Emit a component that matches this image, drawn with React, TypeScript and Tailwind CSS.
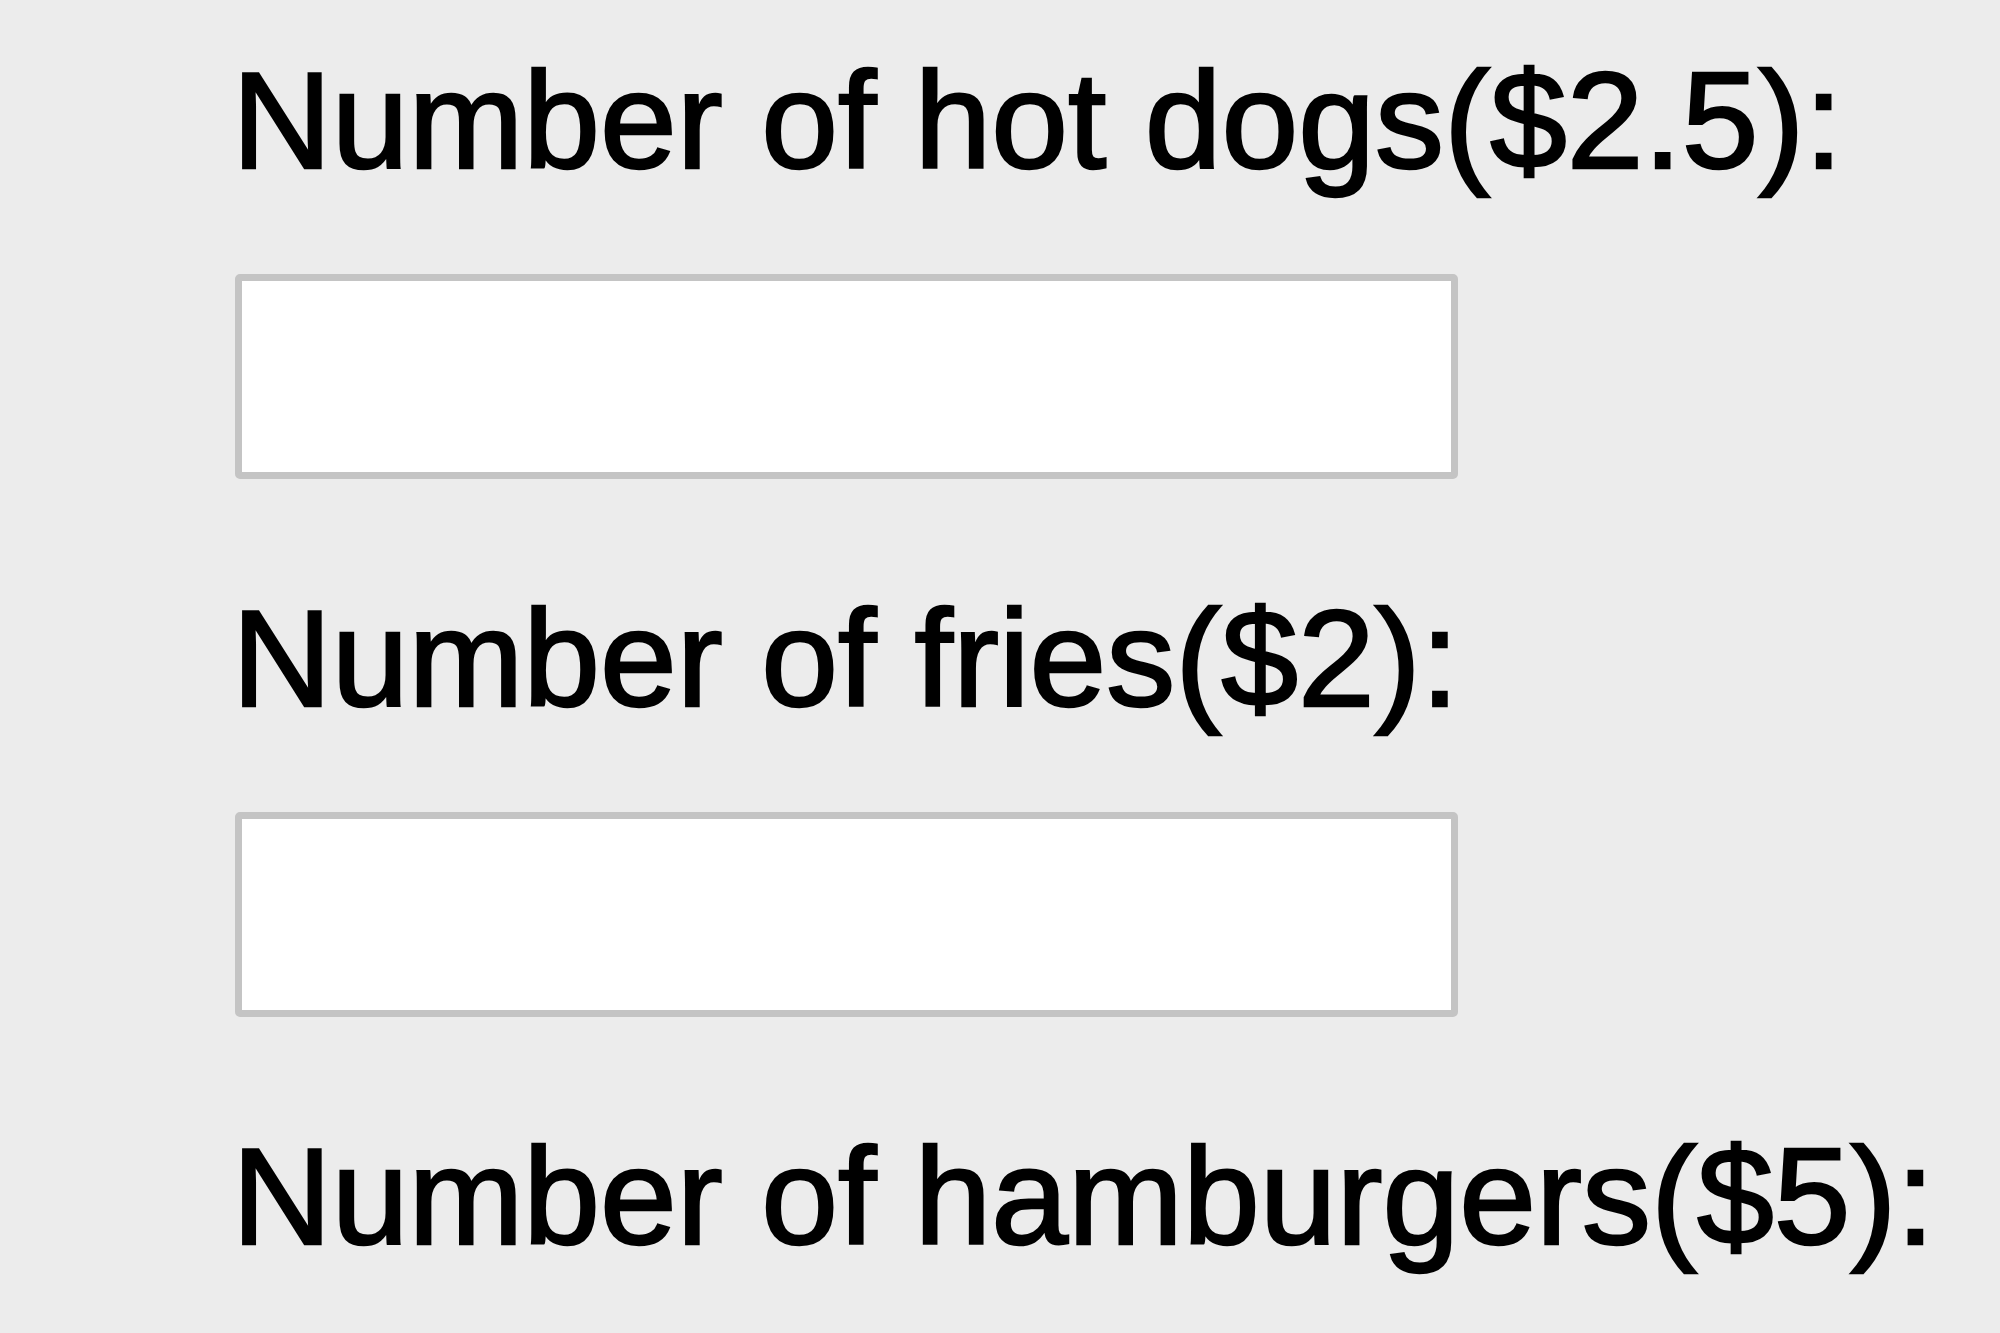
import React from "react";

const labels = [
  "Number of hot dogs($2.5):",
  "Number of fries($2):",
  "Number of hamburgers($5):",
];

const labelCls =
  "-ml-[3px] whitespace-nowrap text-[138px] leading-[152px] [-webkit-text-stroke:2.5px_black]";

const inputCls =
  "mt-[78px] h-[205px] w-[1223px] rounded-[5px] border-[7px] border-[#c4c4c4] bg-white outline-none";

export default function App() {
  return (
    <div
      className="w-[2000px] h-[1333px] overflow-hidden bg-[#ececec] text-black"
      style={{ fontFamily: '"Liberation Sans", Arial, Helvetica, sans-serif' }}
    >
      <div className="flex flex-col pl-[235px] pt-[44px]">
        <label className={labelCls}>{labels[0]}</label>
        <input type="text" className={inputCls} />
        <label className={"mt-[103px] " + labelCls}>{labels[1]}</label>
        <input type="text" className={inputCls} />
        <label className={"mt-[103px] " + labelCls}>{labels[2]}</label>
      </div>
    </div>
  );
}
